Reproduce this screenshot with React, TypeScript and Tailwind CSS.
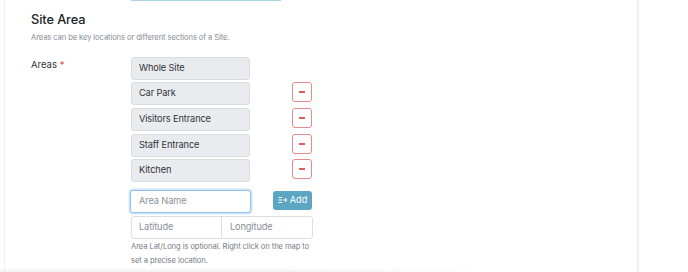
import React from "react";

const areas = [
  { name: "Whole Site", cls: "mt-0" },
  { name: "Car Park", cls: "mt-[2px]" },
  { name: "Visitors Entrance", cls: "mt-[3px]" },
  { name: "Staff Entrance", cls: "mt-[3px]" },
  { name: "Kitchen", cls: "mt-[2px]" },
];

function MinusButton() {
  return (
    <button className="w-[20px] h-[20px] rounded-[3px] border border-[#e68a8a] bg-white flex items-center justify-center">
      <span className="block w-[6px] h-[1.5px] bg-[#e05c5c]" />
    </button>
  );
}

function ListPlusIcon() {
  return (
    <svg width="10" height="8" viewBox="0 0 10 8" fill="none" stroke="white" strokeWidth="1">
      <path d="M0.5 1.5H4.2M0.5 4H4.2M0.5 6.5H4.2" />
      <path d="M5.5 4H9.5M7.5 2V6" />
    </svg>
  );
}

export default function App() {
  return (
    <div
      className="relative w-[688px] h-[272px] bg-white overflow-hidden flex"
      style={{ fontFamily: "Inter, 'Noto Sans', sans-serif" }}
    >
      <div className="w-[4px] shrink-0" />
      <div className="w-[633px] shrink-0 border-l border-[#f1f1f1] flex flex-col">
        <div className="ml-[126px] w-[150px] h-[1.5px] bg-[#a9d4e2]" />
        <h2 className="ml-[26px] mt-[11px] text-[12.8px] leading-[16px] font-medium tracking-[-0.1px] text-[#212529]">Site Area</h2>
        <p className="ml-[26px] mt-[4px] text-[7.6px] leading-[12px] tracking-[-0.1px] text-[#868d94]">
          Areas can be key locations or different sections of a Site.
        </p>
        <div className="ml-[26px] mt-[13px] flex">
          <div className="w-[100px] pt-[2px] text-[9.5px] leading-[12px] text-[#2f3439]">
            Areas <span className="text-[#e0474c]">*</span>
          </div>
          <div className="flex flex-col">
            <div className="flex flex-col">
              {areas.map((a, i) => (
                <div key={a.name} className={"flex items-start " + a.cls}>
                  <div className="w-[119px] h-[23px] rounded-[3px] border border-[#d9dcdf] bg-[#e9ebee] px-[7px] flex items-center text-[9.2px] tracking-[-0.1px] text-[#30353a]">
                    {a.name}
                  </div>
                  {i > 0 && (
                    <div className="ml-[42px]">
                      <MinusButton />
                    </div>
                  )}
                </div>
              ))}
            </div>
            <div className="mt-[8px] flex items-start">
              <div className="w-[121px] -ml-[1px] h-[23px] rounded-[3px] border border-[#8fc0f0] shadow-[0_0_0_1.5px_rgba(150,195,245,0.45)] bg-white px-[8px] flex items-center text-[9.2px] tracking-[-0.1px] text-[#8a9097]">
                Area Name
              </div>
              <button className="ml-[22px] mt-[1px] w-[39px] h-[19px] rounded-[3px] bg-[#5ca5c3] text-white text-[9.2px] flex items-center justify-center gap-[2px]">
                <ListPlusIcon />
                <span>Add</span>
              </button>
            </div>
            <div className="mt-[3px] flex w-[182px] h-[23px] rounded-[3px] border border-[#dcdfe2] text-[9.2px] tracking-[-0.1px] text-[#8a9097]">
              <div className="w-[90px] border-r border-[#dcdfe2] px-[7px] flex items-center">Latitude</div>
              <div className="flex-1 px-[8px] flex items-center">Longitude</div>
            </div>
            <p className="mt-[1px] w-[185px] text-[7.6px] leading-[14px] tracking-[-0.08px] text-[#767c83]">
              Area Lat/Long is optional. Right click on the map to set a precise location.
            </p>
          </div>
        </div>
        <div className="mt-auto h-[7px] w-[490px] -ml-[5px] bg-gradient-to-b from-transparent to-[#efefef] [mask-image:linear-gradient(to_right,black_55%,transparent)]" />
      </div>
      <div className="w-[2px] shrink-0 bg-[#efefef]" />
      <div className="flex-1" />
    </div>
  );
}
